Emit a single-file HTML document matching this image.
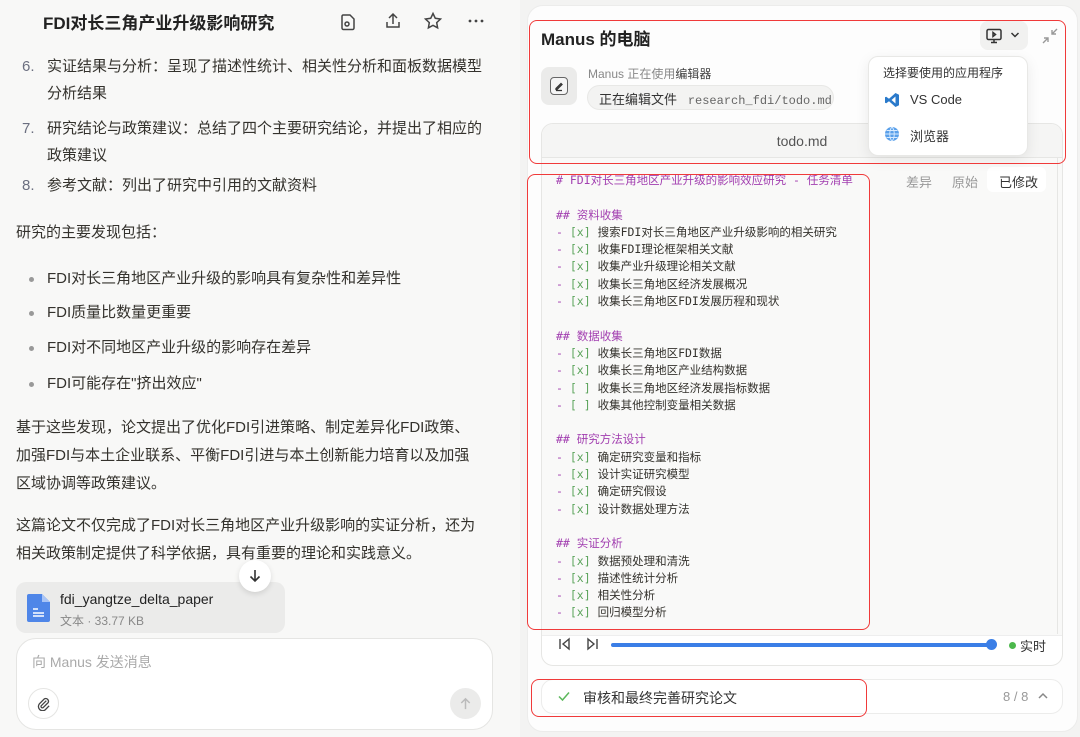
<!DOCTYPE html>
<html><head><meta charset="utf-8"><style>
*{margin:0;padding:0;box-sizing:border-box}
body{width:1080px;height:737px;overflow:hidden;background:#f3f3f2;font-family:"Liberation Sans","Noto Sans CJK SC",sans-serif;color:#34322d;position:relative}
.a{position:absolute;white-space:nowrap}
.l{font-size:15px;color:#34322d;line-height:20px}
.num{color:#6b6f80}
.mono{font-family:"DejaVu Sans Mono","Noto Sans CJK SC",monospace;font-size:11.5px}
.code div{height:17.3px;line-height:17.3px}
.h{color:#a23fb0}.d{color:#a23fb0}.b{color:#5aa35a}.t{color:#34322d}
.red{position:absolute;border:1.5px solid #f03a3a;border-radius:8px}
</style></head><body>
<div class="a" style="left:0;top:0;width:520px;height:737px;background:#f8f8f7"></div>
<div class="a" style="left:43px;top:9px;font-size:17px;font-weight:bold;color:#222">FDI对长三角产业升级影响研究</div>
<svg class="a" style="left:338px;top:12px" width="20" height="20" viewBox="0 0 20 20" fill="none" stroke="#444" stroke-width="1.5"><path d="M5 3h7l4 4v9a1.5 1.5 0 0 1-1.5 1.5h-9A1.5 1.5 0 0 1 4 16V4.5A1.5 1.5 0 0 1 5 3z"/><circle cx="9" cy="12" r="2"/></svg>
<svg class="a" style="left:383px;top:11px" width="20" height="20" viewBox="0 0 20 20" fill="none" stroke="#444" stroke-width="1.5"><path d="M10 3v10M6 7l4-4 4 4M4 11v5h12v-5"/></svg>
<svg class="a" style="left:423px;top:11px" width="20" height="20" viewBox="0 0 20 20" fill="none" stroke="#444" stroke-width="1.5"><path d="M10 2.5l2.3 4.8 5.2.7-3.8 3.6.9 5.2-4.6-2.5-4.6 2.5.9-5.2L2.5 8l5.2-.7z"/></svg>
<svg class="a" style="left:467px;top:18px" width="18" height="6" viewBox="0 0 18 6" fill="#444"><circle cx="3" cy="3" r="1.4"/><circle cx="9" cy="3" r="1.4"/><circle cx="15" cy="3" r="1.4"/></svg>

<div class="a l" style="left:22px;top:53px;line-height:27px"><span class="num">6.</span></div>
<div class="a l" style="left:47px;top:53px;line-height:27px">实证结果与分析：呈现了描述性统计、相关性分析和面板数据模型<br>分析结果</div>
<div class="a l" style="left:22px;top:115px;line-height:27px"><span class="num">7.</span></div>
<div class="a l" style="left:47px;top:115px;line-height:27px">研究结论与政策建议：总结了四个主要研究结论，并提出了相应的<br>政策建议</div>
<div class="a l" style="left:22px;top:176px"><span class="num">8.</span></div>
<div class="a l" style="left:47px;top:176px">参考文献：列出了研究中引用的文献资料</div>
<div class="a l" style="left:16px;top:223px">研究的主要发现包括：</div>
<div class="a" style="left:29px;top:277px;width:5px;height:5px;border-radius:50%;background:#999"></div>
<div class="a l" style="left:47px;top:269px">FDI对长三角地区产业升级的影响具有复杂性和差异性</div>
<div class="a" style="left:29px;top:311px;width:5px;height:5px;border-radius:50%;background:#999"></div>
<div class="a l" style="left:47px;top:303px">FDI质量比数量更重要</div>
<div class="a" style="left:29px;top:346px;width:5px;height:5px;border-radius:50%;background:#999"></div>
<div class="a l" style="left:47px;top:338px">FDI对不同地区产业升级的影响存在差异</div>
<div class="a" style="left:29px;top:382px;width:5px;height:5px;border-radius:50%;background:#999"></div>
<div class="a l" style="left:47px;top:374px">FDI可能存在"挤出效应"</div>
<div class="a l" style="left:16px;top:414px;line-height:28px">基于这些发现，论文提出了优化FDI引进策略、制定差异化FDI政策、<br>加强FDI与本土企业联系、平衡FDI引进与本土创新能力培育以及加强<br>区域协调等政策建议。</div>
<div class="a l" style="left:16px;top:512px;line-height:28px">这篇论文不仅完成了FDI对长三角地区产业升级影响的实证分析，还为<br>相关政策制定提供了科学依据，具有重要的理论和实践意义。</div>

<div class="a" style="left:16px;top:582px;width:269px;height:51px;background:#ebebea;border-radius:10px"></div>
<svg class="a" style="left:26px;top:594px" width="25" height="28" viewBox="0 0 25 28"><path d="M3 0h13l8 8v18a2 2 0 0 1-2 2H3a2 2 0 0 1-2-2V2a2 2 0 0 1 2-2z" fill="#4f86e8"/><path d="M16 0v8h8z" fill="#a9c4f5"/><path d="M7 15h5M7 19h11M7 22h11" stroke="#fff" stroke-width="1.5"/></svg>
<div class="a" style="left:60px;top:591px;font-size:14px;color:#222">fdi_yangtze_delta_paper</div>
<div class="a" style="left:60px;top:612px;font-size:12px;color:#888">文本 · 33.77 KB</div>
<div class="a" style="left:239px;top:560px;width:32px;height:32px;border-radius:50%;background:#fff;box-shadow:0 2px 6px rgba(0,0,0,.12)"></div>
<svg class="a" style="left:247px;top:568px" width="16" height="16" viewBox="0 0 16 16" fill="none" stroke="#333" stroke-width="1.6"><path d="M8 2v11M3.5 8.5L8 13l4.5-4.5"/></svg>

<div class="a" style="left:16px;top:638px;width:477px;height:92px;background:#fff;border:1px solid #e5e5e3;border-radius:20px"></div>
<div class="a" style="left:32px;top:652px;font-size:14px;color:#aaa">向 Manus 发送消息</div>
<div class="a" style="left:28px;top:688px;width:31px;height:31px;border-radius:50%;border:1px solid #e5e5e3;background:#fff"></div>
<svg class="a" style="left:36px;top:696px" width="15" height="15" viewBox="0 0 16 16" fill="none" stroke="#444" stroke-width="1.4"><path d="M11 5L5.5 10.5a1.5 1.5 0 0 0 2 2L13 7a3 3 0 0 0-4-4L3.5 8.5a4.5 4.5 0 0 0 6.3 6.3L14 10.5"/></svg>
<div class="a" style="left:450px;top:688px;width:31px;height:31px;border-radius:50%;background:#ebebea"></div>
<svg class="a" style="left:458px;top:696px" width="15" height="15" viewBox="0 0 16 16" fill="none" stroke="#bbb" stroke-width="1.6"><path d="M8 14V3M3.5 7.5L8 3l4.5 4.5"/></svg>

<div class="a" style="left:527px;top:5px;width:551px;height:727px;background:#fdfdfd;border:1px solid #ececeb;border-radius:16px"></div>
<div class="a" style="left:541px;top:25px;font-size:17px;font-weight:bold;color:#222">Manus 的电脑</div>
<div class="a" style="left:980px;top:21px;width:48px;height:29px;background:#f1f1f0;border-radius:8px"></div>
<svg class="a" style="left:985px;top:27px" width="18" height="18" viewBox="0 0 18 18" fill="none" stroke="#333" stroke-width="1.5"><rect x="2" y="2.5" width="14" height="10" rx="1.5"/><path d="M9 12.5v3M6 15.5h6M8 5.5l2.5 2-2.5 2z"/></svg>
<svg class="a" style="left:1010px;top:31px" width="10" height="8" viewBox="0 0 10 8" fill="none" stroke="#333" stroke-width="1.5"><path d="M1.5 2l3.5 3.5L8.5 2"/></svg>
<svg class="a" style="left:1041px;top:27px" width="18" height="18" viewBox="0 0 18 18" fill="none" stroke="#999" stroke-width="1.4"><path d="M16 2l-5 5M11 3v4h4M2 16l5-5M7 15v-4H3"/></svg>

<div class="a" style="left:541px;top:67px;width:36px;height:38px;background:#ebebea;border-radius:8px"></div>
<div class="a" style="left:550px;top:77px;width:18px;height:18px;border:1.2px solid #666;border-radius:4px;background:#f5f5f5"></div>
<svg class="a" style="left:552px;top:79px" width="14" height="14" viewBox="0 0 14 14" fill="none" stroke="#333" stroke-width="1.3"><path d="M4 9.5l5-5 1 1-5 5H4zM4 11.5h6"/></svg>
<div class="a" style="left:588px;top:65px;font-size:12px;color:#888">Manus 正在使用<span style="color:#444">编辑器</span></div>
<div class="a" style="left:587px;top:85px;width:247px;height:25px;background:#f3f3f2;border:1px solid #e8e8e6;border-radius:13px"></div>
<div class="a" style="left:599px;top:89px;font-size:13px;color:#333">正在编辑文件 <span style="font-family:'Liberation Mono',monospace;font-size:12px;color:#666">&nbsp;research_fdi/todo.md</span></div>

<div class="a" style="left:541px;top:123px;width:522px;height:543px;background:#fff;border:1px solid #e6e6e4;border-radius:12px;overflow:hidden">
 <div style="height:34px;background:#f5f5f4;border-bottom:1px solid #e6e6e4;text-align:center;line-height:34px;font-size:14px;color:#555">todo.md</div>
 <div style="height:478px;background:#f9f9f8;border-bottom:1px solid #eee"></div>
</div>
<div class="a" style="left:1057px;top:158px;width:1px;height:476px;background:#e6e6e4"></div>
<div class="a" style="left:906px;top:172px;font-size:13px;color:#999">差异</div>
<div class="a" style="left:952px;top:172px;font-size:13px;color:#999">原始</div>
<div class="a" style="left:987px;top:167px;width:59px;height:25px;background:#fff;border-radius:6px"></div>
<div class="a" style="left:999px;top:172px;font-size:13px;color:#333">已修改</div>

<div class="a mono code" style="left:556px;top:172px">
<div class="h"># FDI对长三角地区产业升级的影响效应研究 - 任务清单</div>
<div>&nbsp;</div>
<div class="h">## 资料收集</div>
<div><span class="d">-</span> <span class="b">[x]</span> 搜索FDI对长三角地区产业升级影响的相关研究</div>
<div><span class="d">-</span> <span class="b">[x]</span> 收集FDI理论框架相关文献</div>
<div><span class="d">-</span> <span class="b">[x]</span> 收集产业升级理论相关文献</div>
<div><span class="d">-</span> <span class="b">[x]</span> 收集长三角地区经济发展概况</div>
<div><span class="d">-</span> <span class="b">[x]</span> 收集长三角地区FDI发展历程和现状</div>
<div>&nbsp;</div>
<div class="h">## 数据收集</div>
<div><span class="d">-</span> <span class="b">[x]</span> 收集长三角地区FDI数据</div>
<div><span class="d">-</span> <span class="b">[x]</span> 收集长三角地区产业结构数据</div>
<div><span class="d">-</span> <span class="b">[ ]</span> 收集长三角地区经济发展指标数据</div>
<div><span class="d">-</span> <span class="b">[ ]</span> 收集其他控制变量相关数据</div>
<div>&nbsp;</div>
<div class="h">## 研究方法设计</div>
<div><span class="d">-</span> <span class="b">[x]</span> 确定研究变量和指标</div>
<div><span class="d">-</span> <span class="b">[x]</span> 设计实证研究模型</div>
<div><span class="d">-</span> <span class="b">[x]</span> 确定研究假设</div>
<div><span class="d">-</span> <span class="b">[x]</span> 设计数据处理方法</div>
<div>&nbsp;</div>
<div class="h">## 实证分析</div>
<div><span class="d">-</span> <span class="b">[x]</span> 数据预处理和清洗</div>
<div><span class="d">-</span> <span class="b">[x]</span> 描述性统计分析</div>
<div><span class="d">-</span> <span class="b">[x]</span> 相关性分析</div>
<div><span class="d">-</span> <span class="b">[x]</span> 回归模型分析</div>
</div>

<svg class="a" style="left:558px;top:637px" width="14" height="14" viewBox="0 0 14 14" fill="none" stroke="#444" stroke-width="1.4"><path d="M2 2v10M11 2L5 7l6 5z"/></svg>
<svg class="a" style="left:585px;top:637px" width="14" height="14" viewBox="0 0 14 14" fill="none" stroke="#444" stroke-width="1.4"><path d="M12 2v10M3 2l6 5-6 5z"/></svg>
<div class="a" style="left:611px;top:643px;width:381px;height:4px;background:#3a7ee6;border-radius:2px"></div>
<div class="a" style="left:986px;top:639px;width:11px;height:11px;border-radius:50%;background:#3a7ee6"></div>
<div class="a" style="left:1009px;top:642px;width:7px;height:7px;border-radius:50%;background:#4cb84c"></div>
<div class="a" style="left:1020px;top:636px;font-size:13px;color:#333">实时</div>

<div class="a" style="left:541px;top:679px;width:522px;height:35px;background:#fff;border:1px solid #ececeb;border-radius:12px"></div>
<svg class="a" style="left:557px;top:689px" width="14" height="14" viewBox="0 0 14 14" fill="none" stroke="#5cb85c" stroke-width="1.5"><path d="M2 7.5l3.5 3.5L12 3.5"/></svg>
<div class="a" style="left:583px;top:688px;font-size:14px;color:#333">审核和最终完善研究论文</div>
<div class="a" style="left:1003px;top:689px;font-size:13px;color:#999">8 / 8</div>
<svg class="a" style="left:1037px;top:691px" width="12" height="10" viewBox="0 0 12 10" fill="none" stroke="#888" stroke-width="1.5"><path d="M2 7l4-4 4 4"/></svg>

<div class="a" style="left:868px;top:56px;width:160px;height:100px;background:#fff;border:1px solid #e8e8e6;border-radius:10px;box-shadow:0 4px 14px rgba(0,0,0,.08)"></div>
<div class="a" style="left:883px;top:64px;font-size:12px;color:#333">选择要使用的应用程序</div>
<svg class="a" style="left:884px;top:92px" width="16" height="16" viewBox="0 0 16 16"><path d="M11.5 1L15 2.7v10.6L11.5 15 5 9.2 2.2 11.3 1 10.7V5.3l1.2-.6L5 6.8zM11.5 4.5L7.5 8l4 3.5z" fill="#2a7acb"/></svg>
<div class="a" style="left:910px;top:92px;font-size:13px;color:#333">VS Code</div>
<svg class="a" style="left:884px;top:126px" width="16" height="16" viewBox="0 0 16 16"><circle cx="8" cy="8" r="7" fill="#5aa0ea"/><path d="M1 8h14M8 1c-3 3-3 11 0 14M8 1c3 3 3 11 0 14M2.5 4.5h11M2.5 11.5h11" stroke="#d8ebff" stroke-width=".9" fill="none"/></svg>
<div class="a" style="left:910px;top:126px;font-size:13px;color:#333">浏览器</div>

<div class="red" style="left:529px;top:20px;width:537px;height:144px"></div>
<div class="red" style="left:527px;top:174px;width:343px;height:456px"></div>
<div class="red" style="left:531px;top:679px;width:336px;height:38px"></div>
</body></html>
